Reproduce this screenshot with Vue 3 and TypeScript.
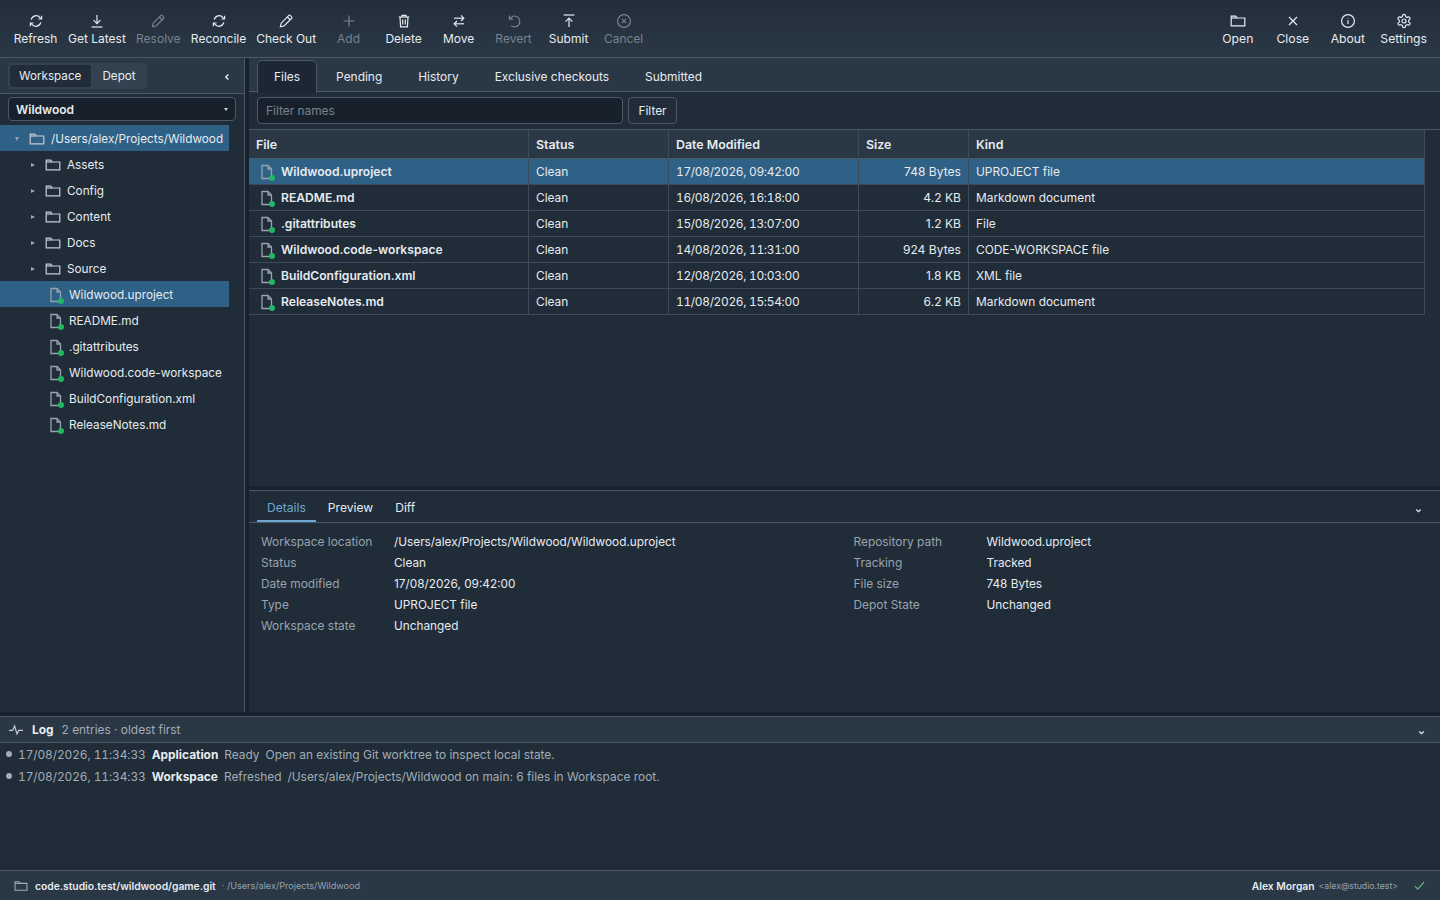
<script setup lang="ts">
interface Tool { label: string; icon: string; off?: boolean }
interface FileRow { name: string; date: string; size: string; kind: string }

const icons: Record<string, string> = {
  refresh: '<path d="M3.2 6.6A5 5 0 0 1 12 4.6l1.4 1.2"/><path d="M13.6 2.8v3.2h-3.2"/><path d="M12.8 9.4A5 5 0 0 1 4 11.4l-1.4-1.2"/><path d="M2.4 13.2V10h3.2"/>',
  download: '<path d="M8 2v8.4"/><path d="M4.6 7.2 8 10.6l3.4-3.4"/><path d="M2.6 14h10.8"/>',
  pencil: '<path d="M10.6 2.6a1.3 1.3 0 0 1 1.9 0l1 1a1.3 1.3 0 0 1 0 1.9L6 13l-3.6.8.8-3.6z"/><path d="m9.4 4 2.8 2.8"/>',
  plus: '<path d="M8 2.6v10.8M2.6 8h10.8"/>',
  trash: '<path d="M2.8 4h10.4"/><path d="M6 4V2.4h4V4"/><path d="M4 4l.6 9.8h6.8L12 4"/><path d="M6.7 6.4v5M9.3 6.4v5"/>',
  move: '<path d="M3 5.2h9.6"/><path d="M10 2.4l2.8 2.8L10 8"/><path d="M13 10.8H3.4"/><path d="M6 8l-2.8 2.8L6 13.6"/>',
  revert: '<path d="M3.4 2.4v3.8h3.8"/><path d="M3.6 6A5.4 5.4 0 1 1 5 12.6"/>',
  submit: '<path d="M2.6 2h10.8"/><path d="M8 14V5.4"/><path d="M4.6 8.6 8 5.2l3.4 3.4"/>',
  cancel: '<circle cx="8" cy="8" r="6.4"/><path d="m5.9 5.9 4.2 4.2M10.1 5.9l-4.2 4.2"/>',
  folder: '<path d="M1.2 12.8V3.2h4.6l1.4 1.8h7.6v7.8z"/><path d="M1.2 5h6"/>',
  close: '<path d="m4 4 8 8M12 4l-8 8"/>',
  info: '<circle cx="8" cy="8" r="6.4"/><path d="M8 7.2v3.8"/><path d="M8 4.9v.5"/>',
  gear: '<circle cx="8" cy="8" r="2"/><g transform="scale(.667)"><path vector-effect="non-scaling-stroke" d="M12.22 2h-.44a2 2 0 0 0-2 2v.18a2 2 0 0 1-1 1.73l-.43.25a2 2 0 0 1-2 0l-.15-.08a2 2 0 0 0-2.73.73l-.22.38a2 2 0 0 0 .73 2.73l.15.1a2 2 0 0 1 1 1.72v.51a2 2 0 0 1-1 1.74l-.15.09a2 2 0 0 0-.73 2.73l.22.38a2 2 0 0 0 2.73.73l.15-.08a2 2 0 0 1 2 0l.43.25a2 2 0 0 1 1 1.73V20a2 2 0 0 0 2 2h.44a2 2 0 0 0 2-2v-.18a2 2 0 0 1 1-1.73l.43-.25a2 2 0 0 1 2 0l.15.08a2 2 0 0 0 2.73-.73l.22-.39a2 2 0 0 0-.73-2.73l-.15-.08a2 2 0 0 1-1-1.74v-.5a2 2 0 0 1 1-1.74l.15-.09a2 2 0 0 0 .73-2.73l-.22-.38a2 2 0 0 0-2.73-.73l-.15.08a2 2 0 0 1-2 0l-.43-.25a2 2 0 0 1-1-1.73V4a2 2 0 0 0-2-2z"/></g>',
}

const leftTools: Tool[] = [
  { label: 'Refresh', icon: 'refresh' },
  { label: 'Get Latest', icon: 'download' },
  { label: 'Resolve', icon: 'pencil', off: true },
  { label: 'Reconcile', icon: 'refresh' },
  { label: 'Check Out', icon: 'pencil' },
  { label: 'Add', icon: 'plus', off: true },
  { label: 'Delete', icon: 'trash' },
  { label: 'Move', icon: 'move' },
  { label: 'Revert', icon: 'revert', off: true },
  { label: 'Submit', icon: 'submit' },
  { label: 'Cancel', icon: 'cancel', off: true },
]
const rightTools: Tool[] = [
  { label: 'Open', icon: 'folder' },
  { label: 'Close', icon: 'close' },
  { label: 'About', icon: 'info' },
  { label: 'Settings', icon: 'gear' },
]

const dirs = ['Assets', 'Config', 'Content', 'Docs', 'Source']
const files: FileRow[] = [
  { name: 'Wildwood.uproject', date: '17/08/2026, 09:42:00', size: '748 Bytes', kind: 'UPROJECT file' },
  { name: 'README.md', date: '16/08/2026, 16:18:00', size: '4.2 KB', kind: 'Markdown document' },
  { name: '.gitattributes', date: '15/08/2026, 13:07:00', size: '1.2 KB', kind: 'File' },
  { name: 'Wildwood.code-workspace', date: '14/08/2026, 11:31:00', size: '924 Bytes', kind: 'CODE-WORKSPACE file' },
  { name: 'BuildConfiguration.xml', date: '12/08/2026, 10:03:00', size: '1.8 KB', kind: 'XML file' },
  { name: 'ReleaseNotes.md', date: '11/08/2026, 15:54:00', size: '6.2 KB', kind: 'Markdown document' },
]
const tabs = ['Files', 'Pending', 'History', 'Exclusive checkouts', 'Submitted']
const detailTabs = ['Details', 'Preview', 'Diff']
const details = [
  ['Workspace location', '/Users/alex/Projects/Wildwood/Wildwood.uproject', 'Repository path', 'Wildwood.uproject'],
  ['Status', 'Clean', 'Tracking', 'Tracked'],
  ['Date modified', '17/08/2026, 09:42:00', 'File size', '748 Bytes'],
  ['Type', 'UPROJECT file', 'Depot State', 'Unchanged'],
  ['Workspace state', 'Unchanged', '', ''],
]
const logs = [
  { source: 'Application', title: 'Ready', text: 'Open an existing Git worktree to inspect local state.' },
  { source: 'Workspace', title: 'Refreshed', text: '/Users/alex/Projects/Wildwood on main: 6 files in Workspace root.' },
]
</script>

<template>
  <div class="app">
    <header class="toolbar">
      <div class="tool-group">
        <button v-for="t in leftTools" :key="t.label" class="tool" :class="{ off: t.off }">
          <svg class="tool-icon" viewBox="0 0 16 16" v-html="icons[t.icon]"></svg>
          <span>{{ t.label }}</span>
        </button>
      </div>
      <div class="tool-group right">
        <button v-for="t in rightTools" :key="t.label" class="tool">
          <svg class="tool-icon" viewBox="0 0 16 16" v-html="icons[t.icon]"></svg>
          <span>{{ t.label }}</span>
        </button>
      </div>
    </header>

    <div class="main">
      <aside class="side">
        <div class="side-head">
          <div class="segment">
            <span class="seg active">Workspace</span>
            <span class="seg">Depot</span>
          </div>
          <svg class="collapse" viewBox="0 0 8 8"><path d="M5.4 1.4 2.8 4l2.6 2.6" /></svg>
        </div>
        <div class="select-row">
          <div class="select">
            <span>Wildwood</span>
            <i class="caret-down small"></i>
          </div>
        </div>
        <div class="tree">
          <div class="tree-row root sel">
            <i class="caret-down"></i>
            <svg class="folder" viewBox="0 0 16 16" v-html="icons.folder"></svg>
            <span>/Users/alex/Projects/Wildwood</span>
          </div>
          <div v-for="d in dirs" :key="d" class="tree-row dir">
            <i class="caret-right"></i>
            <svg class="folder" viewBox="0 0 16 16" v-html="icons.folder"></svg>
            <span>{{ d }}</span>
          </div>
          <div v-for="(f, i) in files" :key="f.name" class="tree-row leaf" :class="{ sel: i === 0 }">
            <span class="file-icon">
              <svg viewBox="0 0 14 16"><path d="M2 1.5h6l3.5 3.5v9.5H2z" /><path d="M8 1.5V5h3.5" /></svg>
              <b></b>
            </span>
            <span>{{ f.name }}</span>
          </div>
        </div>
      </aside>

      <section class="content">
        <nav class="tabs">
          <span v-for="(t, i) in tabs" :key="t" class="tab" :class="{ active: i === 0 }">{{ t }}</span>
        </nav>
        <div class="filter-row">
          <div class="filter-input">Filter names</div>
          <button class="filter-btn">Filter</button>
        </div>

        <div class="table-wrap">
          <div class="table">
            <div class="tr head">
              <div class="td">File</div>
              <div class="td">Status</div>
              <div class="td">Date Modified</div>
              <div class="td">Size</div>
              <div class="td">Kind</div>
            </div>
            <div v-for="(f, i) in files" :key="f.name" class="tr" :class="{ sel: i === 0 }">
              <div class="td name">
                <span class="file-icon">
                  <svg viewBox="0 0 14 16"><path d="M2 1.5h6l3.5 3.5v9.5H2z" /><path d="M8 1.5V5h3.5" /></svg>
                  <b></b>
                </span>
                <span>{{ f.name }}</span>
              </div>
              <div class="td">Clean</div>
              <div class="td date">{{ f.date }}</div>
              <div class="td num">{{ f.size }}</div>
              <div class="td">{{ f.kind }}</div>
            </div>
          </div>
        </div>

        <div class="details">
          <div class="detail-tabs">
            <div class="detail-tab-list">
              <span v-for="(t, i) in detailTabs" :key="t" class="detail-tab" :class="{ active: i === 0 }">{{ t }}</span>
            </div>
            <svg class="chev detail-chev" viewBox="0 0 8 8"><path d="M1.4 2.8 4 5.4l2.6-2.6" /></svg>
          </div>
          <div class="detail-grid">
            <div v-for="r in details" :key="r[0]" class="detail-row">
              <div class="pair"><span class="k">{{ r[0] }}</span><span class="v">{{ r[1] }}</span></div>
              <div class="pair"><span class="k">{{ r[2] }}</span><span class="v">{{ r[3] }}</span></div>
            </div>
          </div>
        </div>
      </section>
    </div>

    <section class="log">
      <div class="log-head">
        <svg class="pulse" viewBox="0 0 16 16"><path d="M1 8.4h3.6l2-4.4 2.4 8 1.8-3.6H15" /></svg>
        <strong>Log</strong>
        <span class="log-meta">2 entries · oldest first</span>
        <svg class="chev log-chev" viewBox="0 0 8 8"><path d="M1.4 2.8 4 5.4l2.6-2.6" /></svg>
      </div>
      <div class="log-body">
        <div v-for="l in logs" :key="l.source" class="log-row">
          <i class="dot"></i>
          <span class="muted time">17/08/2026, 11:34:33</span>
          <strong>{{ l.source }}</strong>
          <span class="muted">{{ l.title }}</span>
          <span class="muted">{{ l.text }}</span>
        </div>
      </div>
    </section>

    <footer class="status">
      <svg class="status-folder" viewBox="0 0 16 16" v-html="icons.folder"></svg>
      <strong class="repo">code.studio.test/wildwood/game.git</strong>
      <span class="path">· /Users/alex/Projects/Wildwood</span>
      <span class="spacer"></span>
      <strong class="repo">Alex Morgan</strong>
      <span class="email">&lt;alex@studio.test&gt;</span>
      <svg class="check" viewBox="0 0 12 12"><path d="M1 6.6 4.2 10 11 2" /></svg>
    </footer>
  </div>
</template>

<style>
html, body { margin: 0; background: #202c38; }
</style>

<style scoped>
.app {
  height: 100vh;
  display: flex;
  flex-direction: column;
  overflow: hidden;
  background: #202c38;
  color: #e6ebf0;
  font-family: Inter, "Liberation Sans", sans-serif;
  font-size: 11.9px;
  line-height: 16px;
}

/* toolbar */
.toolbar {
  height: 58px;
  box-sizing: border-box;
  flex: none;
  display: flex;
  justify-content: space-between;
  padding: 0 13px;
  background: linear-gradient(#222e3b, #2a3745);
  border-bottom: 1px solid #4a5867;
}
.tool-group { display: flex; gap: 10px; }
.tool {
  min-width: 45px;
  padding: 13px 0 0;
  display: flex;
  flex-direction: column;
  align-items: center;
  gap: 1px;
  background: none;
  border: none;
  color: #e6ebf0;
  font: inherit;
  font-size: 12px;
  white-space: nowrap;
}
.tool-group.right .tool { font-size: 12.2px; }
.tool.off { color: #77838f; }
.tool-icon {
  width: 16px;
  height: 16px;
  margin-bottom: 1px;
}
.tool-icon :deep(*), .folder :deep(*), .status-folder :deep(*) {
  fill: none;
  stroke: currentColor;
  stroke-width: 1.2;
}

.main { flex: 1; min-height: 0; display: flex; border-bottom: 4px solid #18222c; }

/* left side */
.side {
  width: 245px;
  flex: none;
  box-sizing: border-box;
  border-right: 1px solid #4a5867;
  display: flex;
  flex-direction: column;
}
.side-head {
  height: 36px;
  flex: none;
  box-sizing: border-box;
  display: flex;
  align-items: center;
  justify-content: space-between;
  padding: 0 13px 0 8px;
  background: #2a3745;
  border-bottom: 1px solid #4a5867;
}
.segment {
  display: flex;
  gap: 2px;
  padding: 2px;
  border-radius: 4px;
  background: #33424f;
  font-size: 11.7px;
}
.seg { padding: 3px 9px; border-radius: 3px; }
.seg.active { padding-right: 10px; background: #202c38; }
.collapse { width: 8px; height: 8px; margin-top: 2px; }
.collapse path, .chev path {
  fill: none;
  stroke: #e6ebf0;
  stroke-width: 1.4;
}
.select-row { height: 31px; flex: none; box-sizing: border-box; padding: 3px 8px 4px; }
.select {
  height: 24px;
  box-sizing: border-box;
  display: flex;
  align-items: center;
  justify-content: space-between;
  padding: 1px 7px 0;
  border: 1px solid #4a5867;
  border-radius: 4px;
  background: #18212b;
  font-weight: 600;
  font-size: 12px;
}
.tree { width: 229px; font-size: 11.75px; }
.tree-row {
  height: 26px;
  padding-top: 1px;
  box-sizing: border-box;
  display: flex;
  align-items: center;
  white-space: nowrap;
}
.tree-row.sel { background: #2f6085; }
.caret-down, .caret-right { display: block; width: 0; height: 0; flex: none; }
.caret-down {
  border-left: 2.5px solid transparent;
  border-right: 2.5px solid transparent;
  border-top: 4px solid #9aa5b0;
}
.caret-down.small { border-top-color: #c5ccd3; border-left-width: 2px; border-right-width: 2px; border-top-width: 3px; }
.caret-right {
  border-top: 2.5px solid transparent;
  border-bottom: 2.5px solid transparent;
  border-left: 4px solid #9aa5b0;
}
.folder { width: 16px; height: 16px; flex: none; color: #c5ccd3; }
.root { padding-left: 15px; }
.root .folder { margin: 0 6px 0 10px; }
.dir { padding-left: 31px; }
.dir .folder { margin: 0 6px 0 10px; }
.leaf { padding-left: 49px; }
.file-icon {
  position: relative;
  display: block;
  width: 14px;
  height: 16px;
  flex: none;
  margin-right: 6px;
}
.file-icon svg { display: block; width: 14px; height: 16px; }
.file-icon path { fill: none; stroke: #97a3ae; stroke-width: 1.3; }
.file-icon b {
  position: absolute;
  right: -1px;
  bottom: -1px;
  width: 6px;
  height: 6px;
  border-radius: 50%;
  background: #22b566;
}

/* main content */
.content {
  flex: 1;
  min-width: 0;
  display: flex;
  flex-direction: column;
  border-left: 4px solid #18222c;
}
.tabs {
  height: 34px;
  flex: none;
  box-sizing: border-box;
  padding: 2px 0 0 8px;
  display: flex;
  background: #2a3745;
  border-bottom: 1px solid #4a5867;
  font-size: 11.95px;
}
.tab { padding: 0 18px; line-height: 33px; }
.tab.active {
  height: 33px;
  box-sizing: border-box;
  margin-right: 1px;
  padding: 0 16px;
  line-height: 32px;
  background: #1c2733;
  border: 1px solid #4a5867;
  border-bottom: none;
  border-radius: 5px 5px 0 0;
}
.filter-row {
  height: 38px;
  flex: none;
  box-sizing: border-box;
  padding: 5px 0 0 8px;
  display: flex;
  gap: 5px;
  align-items: flex-start;
  border-bottom: 1px solid #4a5867;
}
.filter-input {
  width: 366px;
  height: 27px;
  box-sizing: border-box;
  padding: 0 8px;
  line-height: 25px;
  border: 1px solid #4a5867;
  border-radius: 4px;
  background: #18212b;
  color: #77838f;
}
.filter-btn {
  width: 49px;
  height: 27px;
  padding: 0;
  border: 1px solid #4a5867;
  border-radius: 4px;
  background: #202c38;
  color: #e6ebf0;
  font: inherit;
}

.table-wrap { flex: 1; min-height: 0; border-bottom: 4px solid #18222c; }
.table { width: 1176px; }
.tr {
  height: 26px;
  display: grid;
  grid-template-columns: 280px 140px 190px 110px 1fr;
  border-bottom: 1px solid #3d4b59;
  box-sizing: border-box;
}
.tr.head { height: 29px; font-weight: 600; font-size: 12.4px; background: #2a3745; border-bottom-color: #4a5867; }
.tr.head .td { padding-top: 2px; }
.tr.sel { background: #2f6085; }
.td {
  padding: 0 7px;
  display: flex;
  align-items: center;
  border-right: 1px solid #3d4b59;
  white-space: nowrap;
}
.td.name { padding-left: 11px; font-weight: 600; font-size: 12.1px; }
.td.name .file-icon { margin-right: 7px; }
.td.date { font-variant-numeric: tabular-nums; letter-spacing: -0.3px; }
.td.num { justify-content: flex-end; font-size: 12.1px; }

/* details pane */
.details {
  height: 222px;
  flex: none;
  box-sizing: border-box;
  border-top: 1px solid #4a5867;
}
.detail-tabs {
  height: 32px;
  box-sizing: border-box;
  padding-left: 8px;
  display: flex;
  align-items: stretch;
  justify-content: space-between;
  border-bottom: 1px solid #4a5867;
}
.detail-tab-list { display: flex; gap: 2px; font-size: 12.1px; }
.detail-tab { padding: 0 10px; line-height: 33px; height: 31px; box-sizing: border-box; }
.detail-tab.active { color: #6ea6d2; border-bottom: 2px solid #6ea6d2; }
.chev { width: 7px; height: 7px; }
.detail-chev { margin: 16px 18px 0 0; }
.detail-grid { padding: 8px 12px; }
.detail-row {
  height: 21px;
  display: grid;
  grid-template-columns: 592.5px 1fr;
  align-items: center;
}
.pair { display: flex; }
.k { width: 133px; flex: none; color: #98a3ae; }
.v { white-space: nowrap; font-size: 11.8px; }

/* log */
.log { height: 154px; flex: none; box-sizing: border-box; border-top: 1px solid #4a5867; }
.log-head {
  height: 26px;
  box-sizing: border-box;
  display: flex;
  align-items: center;
  padding: 0 15px 0 8px;
  background: #2a3745;
  border-bottom: 1px solid #4a5867;
}
.pulse { width: 16px; height: 16px; margin-right: 8px; }
.pulse path { fill: none; stroke: #c5ccd3; stroke-width: 1.2; }
.log-meta { margin-left: 8px; color: #a2acb6; }
.log-chev { margin: 5px 0 0 auto; }
.log-body { padding: 1px 0 0 6px; }
.log-row {
  height: 22px;
  display: flex;
  align-items: center;
  gap: 6px;
  white-space: nowrap;
  font-size: 11.9px;
}
.log-row .muted { color: #a2acb6; }
.log-row .time { font-variant-numeric: tabular-nums; letter-spacing: -0.08px; }
.dot {
  width: 6px;
  height: 6px;
  margin-top: -2px;
  border-radius: 50%;
  background: #a2acb6;
}

/* status bar */
.status {
  height: 30px;
  flex: none;
  box-sizing: border-box;
  display: flex;
  align-items: center;
  padding: 0 15px 0 14px;
  background: #2a3745;
  border-top: 1px solid #4a5867;
  font-size: 10.3px;
}
.status-folder { width: 14px; height: 14px; margin-right: 7px; color: #a2acb6; }
.repo { font-weight: 600; }
.path { margin-left: 6px; color: #98a3ae; font-size: 9.1px; }
.email { margin-left: 4px; color: #98a3ae; font-size: 8.7px; }
.spacer { flex: 1; }
.check { width: 11px; height: 11px; margin-left: 16px; }
.check path { fill: none; stroke: #5fbf82; stroke-width: 1.3; }
</style>
